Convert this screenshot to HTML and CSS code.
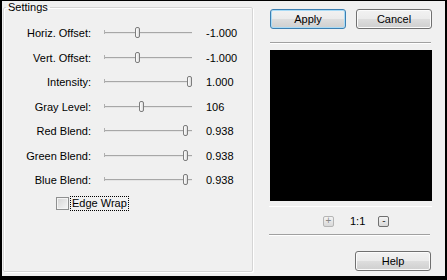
FILE: index.html
```html
<!DOCTYPE html>
<html lang="en">
<head>
    <meta charset="UTF-8">
    <title>Settings</title>
    <link rel="stylesheet" href="styles.css">
</head>
<body>
    <div class="window">
        <fieldset class="settings">
            <legend>Settings</legend>
            <div class="rows">
                <div class="label">Horiz. Offset:</div>
                <div class="slider"><span class="thumb" style="left: 31px"></span></div>
                <div class="value">-1.000</div>

                <div class="label">Vert. Offset:</div>
                <div class="slider"><span class="thumb" style="left: 31px"></span></div>
                <div class="value">-1.000</div>

                <div class="label">Intensity:</div>
                <div class="slider"><span class="thumb" style="left: 83px"></span></div>
                <div class="value">1.000</div>

                <div class="label">Gray Level:</div>
                <div class="slider"><span class="thumb" style="left: 35px"></span></div>
                <div class="value">106</div>

                <div class="label">Red Blend:</div>
                <div class="slider"><span class="thumb" style="left: 79px"></span></div>
                <div class="value">0.938</div>

                <div class="label">Green Blend:</div>
                <div class="slider"><span class="thumb" style="left: 79px"></span></div>
                <div class="value">0.938</div>

                <div class="label">Blue Blend:</div>
                <div class="slider"><span class="thumb" style="left: 79px"></span></div>
                <div class="value">0.938</div>
            </div>
            <label class="check">
                <span class="box"></span>
                <span class="check-text">Edge Wrap</span>
            </label>
        </fieldset>

        <div class="side">
            <div class="buttons">
                <button class="btn default">Apply</button>
                <button class="btn">Cancel</button>
            </div>
            <div class="sep"></div>
            <div class="preview"></div>
            <div class="preview-edge"></div>
            <div class="zoom">
                <button class="zoom-btn dim">+</button>
                <span class="ratio">1:1</span>
                <button class="zoom-btn">-</button>
            </div>
            <div class="sep sep-low"></div>
            <button class="btn help">Help</button>
        </div>
    </div>
</body>
</html>
```

FILE: styles.css
```css
body {
    margin: 0;
    font-family: "Liberation Sans", Arial, sans-serif;
    font-size: 11px;
    color: #000;
}
.window {
    width: 447px;
    height: 280px;
    box-sizing: border-box;
    border-style: solid;
    border-color: #000;
    border-width: 1px 2px 4px 2px;
    background-color: #f0f0f0;
    display: flex;
}
.settings {
    width: 250px;
    box-sizing: border-box;
    margin: 0 0 4px 1px;
    padding: 7px 0 0 0;
    border: 1px solid #d5d5d5;
    border-radius: 2px;
    box-shadow: inset 1px 1px #fff, 1px 1px #fff;
    min-width: 0;
}
.settings legend {
    margin-left: 2px;
    padding: 0 2px;
    line-height: 13px;
}
.rows {
    display: grid;
    grid-template-columns: 87px 88px auto;
    grid-auto-rows: 24.5px;
    column-gap: 13px;
    align-items: center;
}
.label {
    text-align: right;
}
.value {
    padding-left: 1px;
}
.slider {
    position: relative;
    height: 1px;
    background-color: #a7a7a7;
    border-bottom: 1px solid #e4e4e4;
}
.slider::before {
    content: "";
    position: absolute;
    left: 0;
    top: -2px;
    width: 1px;
    height: 4px;
    background-color: #b0b0b0;
}
.thumb {
    position: absolute;
    top: -5px;
    width: 3px;
    height: 9px;
    border: 1px solid #7d7d7d;
    border-radius: 2px;
    background: linear-gradient(to right, #fff, #dcdcdc);
}
.check {
    display: flex;
    align-items: center;
    gap: 2px;
    margin: 4px 0 0 52px;
    height: 14px;
}
.box {
    width: 11px;
    height: 11px;
    border: 1px solid #8e8f8f;
    background: linear-gradient(135deg, #d4d4d4, #f6f6f6);
    box-shadow: inset 0 0 0 1px #f4f4f4;
}
.check-text {
    outline: 1px dotted #000;
    padding: 0 1px;
    line-height: 13px;
}
.side {
    display: flex;
    flex-direction: column;
    padding: 8px 0 0 17px;
    width: 162px;
}
.buttons {
    display: flex;
    gap: 10px;
}
.btn {
    width: 76px;
    height: 20px;
    padding: 0;
    font-family: inherit;
    font-size: 11px;
    color: #000;
    border: 1px solid #707070;
    border-radius: 3px;
    background: linear-gradient(#f2f2f2 0%, #ebebeb 48%, #dddddd 52%, #cfcfcf 100%);
    box-shadow: inset 0 0 0 1px #fbfbfb;
}
.btn.default {
    border-color: #3c7fb1;
    box-shadow: inset 0 0 0 1px #a9dbf6;
}
.sep {
    margin-top: 13px;
    width: 161px;
    height: 1px;
    background-color: #a0a0a0;
    border-bottom: 1px solid #fff;
}
.preview {
    margin-top: 6px;
    width: 162px;
    height: 151px;
    background-color: #000;
}
.preview-edge {
    margin: 5px 0 0 -1px;
    width: 163px;
    height: 1px;
    background-color: #fff;
}
.zoom {
    display: flex;
    align-items: center;
    margin: 9px 0 0 53px;
    height: 10px;
}
.zoom-btn {
    width: 11px;
    height: 11px;
    padding: 0;
    font-family: inherit;
    font-size: 10px;
    line-height: 8px;
    color: #333;
    border: 1px solid #707070;
    border-radius: 2px;
    background: linear-gradient(#f4f4f4, #d8d8d8);
}
.zoom-btn.dim {
    border-color: #b5b5b5;
    color: #888;
}
.ratio {
    margin: 0 13px 0 16px;
}
.sep-low {
    margin-top: 8px;
    margin-left: -1px;
}
.help {
    margin: 15px 0 0 85px;
}
```
